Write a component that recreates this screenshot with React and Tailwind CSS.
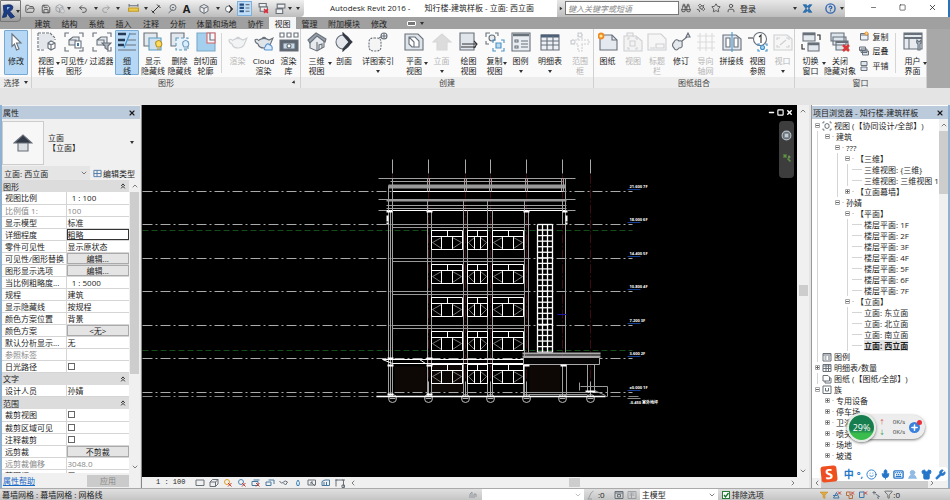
import React from "react";
import {
  Smile, Mic, Keyboard, Shirt, Wrench, UserRound, FolderOpen, Save, Undo2, Redo2,
  Binoculars, Star, User, Satellite, CircleHelp, ChevronDown, ChevronUp, ChevronLeft,
  ChevronRight, X, Minus, Square, Funnel, Plus,
} from "lucide-react";

const S = ({ children, size = "size-5", box = "0 0 20 20", className = "" }) => (
  <svg viewBox={box} className={`${size} shrink-0 ${className}`} fill="none" stroke="#68707a" strokeWidth="1.1" aria-hidden="true">
    {children}
  </svg>
);

const corners = "M1 5V1H5M15 1H19V5M19 15V19H15M5 19H1V15";
const Teapot = () => (
  <path d="M5 8C8 6 12 6 15 8L19 6L16 13Q14 16 10 16Q5 16 4 12Q1 11 1 8Q3 6 5 9M8 6.500Q10 4 12 6.500" fill="#dfe4e9" />
);

const ICONS = {
  cursor: <S><path d="M6 2L15 11H10.500L13 17L10.500 18L8.500 12L6 14.500Z" fill="#fff" /></S>,
  template: <S><path d="M3 2H14L18 6V17H3Z" fill="#e3e7ec" stroke="none" /><path d="M2 1H14L19 6V8M2 1V18H9" strokeDasharray="3 1" /><path d="M12 11L15 9L19 11V16L15 18L12 16ZM12 11L15 13L19 11M15 13V18" fill="#fff" /></S>,
  visibility: <S><path d={corners} /><path d="M5 8L9 5H15V13H5ZM5 8H12V14" fill="#e5e9ee" /><path d="M11 9H17V16H11Z" fill="#fff" /><path d="M13 11H15V14H13Z" fill="#4179a7" stroke="none" /></S>,
  filter: <S><path d={corners} /><path d="M5 8L9 5H15V13H5ZM5 8H12V14" fill="#e5e9ee" /><path d="M10 11H19L16 14V18L13 16V14Z" fill="#aeb5bd" /></S>,
  thin: <S><path d="M1 2H9M1 8H8M1 13H7" stroke="#253954" strokeWidth="2.500" /><path d="M12 2H19M11 8H19M9 13H19M1 18H19" /><path d="M13 1L7 16" stroke="#4291ca" /></S>,
  showHidden: <S><path d="M1 1H14V14H1Z" fill="#e3e8ee" /><path d="M6 6H18V18H6Z" fill="#cfe1ef" stroke="#5c9bc2" /><path d="M13 10Q16 7 18 10Q20 13 17 15H14Q12 12 13 10ZM14 17H17" fill="#ffdb5c" stroke="#b68d20" /></S>,
  removeHidden: <S><path d="M1 1H14V14H1Z" fill="#e3e8ee" /><path d="M6 6H18V18H6Z" fill="#e8f2fa" stroke="#5c9bc2" strokeDasharray="3 2" /><path d="M13 10Q16 7 18 10Q20 13 17 15H14Q12 12 13 10ZM14 17H17" fill="#d9efff" stroke="#6f9abb" /></S>,
  cutProfile: <S><path d="M1 1H19V19H1Z" fill="#a4d0ed" stroke="#7aa9c8" /><path d="M11 1H19V11H11Z" fill="#f5f7fa" stroke="#dc6262" /><path d="M14 1V8H19" /></S>,
  teapot: <S><Teapot /></S>,
  cloud: <S><Teapot /><path d="M11 15Q13 10 16 13Q19 14 18 18H12Q9 18 11 15Z" fill="#d5e9ff" stroke="#5d93ca" /></S>,
  gallery: <S><path d="M1 1H5V5H1ZM8 1H12V5H8ZM15 1H19V5H15Z" fill="#fff" /><path d="M1 8H19V19H1Z" fill="#5c6570" /><path d="M4 11H16V17H4Z" fill="#c7d9e8" /><circle cx="10" cy="14" r="2" fill="#fff" /></S>,
  house: <S><path d="M3 9V16L10 19L17 15V8L10 3Z" fill="#e8ebee" /><path d="M1 8L9 1L19 7L18 10L10 4L3 11Z" fill="#98a1ab" /><path d="M10 19V10M12 18V13L15 12V16" /></S>,
  section: <S><circle cx="9" cy="10" r="7" fill="#e4e8ed" /><path d="M9 1L18 10L9 19V17L15 10L9 3Z" fill="#333a43" stroke="#333a43" /></S>,
  callout: <S><path d="M6 6H8Q13 6 13 10V15Q13 19 8 19H6Q1 19 1 15V10Q1 6 6 6" strokeDasharray="2 1" fill="#f5f5f5" /><circle cx="16" cy="4" r="3" /><path d="M11 6L13 5M13 4H19M16 1V7" /></S>,
  plan: <S><path d="M1 2H14L19 7V18H1Z" fill="#e0e5eb" /><path d="M5 5H11L15 9V15H8L5 12ZM5 5L10 10V15" fill="#fff" /></S>,
  elevation: <S><path d="M1 10L10 2L19 10H15V18H5V10Z" fill="#9a9a9a" stroke="#888" /></S>,
  drafting: <S><path d="M1 1H15V18H1Z" fill="#e0e5eb" /><path d="M3 12H18M15 9L18 12L15 16M2 15H17" stroke="#333" /></S>,
  duplicate: <S><path d="M1 5V1H5M10 1H13V4M1 9V12H4" /><circle cx="7" cy="6" r="3" fill="#e8ebee" /><path d="M8 11V8H11M16 8H19V11M19 16V19H16M11 19H8V16" stroke="#4e91c4" /><path d="M11 11H16V16H11Z" fill="#b9dcf3" stroke="#4e91c4" /></S>,
  legend: <S><path d="M1 1H19V19H1Z" fill="#e9edf1" /><path d="M2 3H18" strokeWidth="2.500" /><path d="M4 8H7V10H4ZM4 14H7V16H4ZM10 9H17M10 12H17M10 15H17" /></S>,
  schedule: <S><path d="M1 3H19V18H1Z" fill="#edf0f4" /><path d="M1 4H19" strokeWidth="3" stroke="#4d6078" /><path d="M1 9H19M1 13H19M7 4V18M13 4V18" /></S>,
  scope: <S><path d="M8 8V1H12V8M12 12V19H8V12H1V8H19V12Z" strokeDasharray="2 1" /><circle cx="10" cy="3" r="2" /><circle cx="3" cy="10" r="2" /></S>,
  sheet: <S><path d="M2 3H14L19 8V18H2Z" fill="#e4e9ef" /><path d="M14 3V8H19" /><circle cx="3" cy="4" r="2.500" fill="#ffe98a" stroke="#ed8a26" strokeWidth="1.800" /></S>,
  viewSheet: <S><path d="M1 4H13L19 9V19H1ZM4 4V1H10V5" fill="#e6e6e6" /><path d="M5 8V6H7M12 6H14V8M14 15V17H12M7 17H5V15" /><path d="M7 9H12V14H7Z" /></S>,
  title: <S><path d="M1 2H14L19 7V18H1Z" fill="#eee" /><path d="M9 12H17V16H9ZM3 16H8" /></S>,
  revision: <S><path d="M3 10Q5 6 8 9Q12 8 11 12Q12 16 8 16Q5 20 3 16Q0 13 3 10ZM11 9L16 5M15 5L17 1L19 5Z" fill="#e5e9ed" /></S>,
  guide: <S><path d="M4 1V19M10 1V19M16 1V19M1 4H19M1 10H19M1 16H19" stroke="#999" /></S>,
  match: <S><path d="M1 3H14L19 7V18H1Z" fill="#e4e9ef" /><path d="M4 6H8V15H4ZM12 6H16V15H12Z" fill="#fff" /><path d="M10 0V20" stroke="#3b9bdb" /></S>,
  reference: <S><circle cx="12" cy="7" r="6.500" fill="#fff" /><path d="M0 6H5M11 5L13 3V11" stroke="#333" /><path d="M10 14V12H12M17 12H19V14M19 17V19H17M12 19H10V17" stroke="#4291ca" /><circle cx="14.500" cy="15.500" r="2" fill="#a9d5f0" stroke="#4291ca" /></S>,
  viewport: <S><path d="M1 3H14L19 7V18H1Z" fill="#eee" /><path d="M4 8V6H7M13 6H16V8M16 13V15H13M7 15H4V13M7 13L13 8" /></S>,
  switch: <S><path d="M2 1H14V9H2ZM7 11H18V19H7Z" fill="#e4e9ef" /><path d="M2 2H14M7 12H18" strokeWidth="2.500" /><path d="M16 3H19V8M4 17H1V12" stroke="#222" /></S>,
  closeHidden: <S><path d="M1 1H14V9H1ZM3 5H16V13H3ZM6 9H18V18H6Z" fill="#dce4ec" /><path d="M6 10H18" strokeWidth="2" /><path d="M13 13L19 19M19 13L13 19" stroke="#dc3636" strokeWidth="2.500" /></S>,
  ui: <S><path d="M1 1H19V17H1Z" fill="#e7ebef" /><path d="M1 2H19M1 6H19" strokeWidth="2" /><path d="M6 7V17" /><path d="M14 8Q13 11 15 12V18H17V12Q19 11 18 8L16 10Z" fill="#b8cadb" /></S>,
  copySmall: <S size="size-[10px]"><path d="M3 5H18V18H3ZM3 8H18" strokeWidth="2" fill="#edf1f5" /><circle cx="15" cy="5" r="3" fill="#ffdc7b" stroke="#ee8c25" strokeWidth="2" /></S>,
  cascade: <S size="size-[10px]"><path d="M1 2H13V9H1ZM4 6H16V13H4ZM7 10H19V18H7Z" strokeWidth="2" fill="#dce4ec" /></S>,
  tile: <S size="size-[10px]"><path d="M4 1H16V9H4ZM4 12H16V19H4Z" strokeWidth="2" fill="#dce4ec" /></S>,
};

const Tri = ({ className = "" }) => (
  <svg viewBox="0 0 4 3" className={`h-[3px] w-1 shrink-0 ${className}`} aria-hidden="true"><path d="M0 0H4L2 3Z" fill="#333" /></svg>
);

const PANELS = [
  {
    title: "选择", drop: true,
    tools: [{ w: "w-8", icon: "cursor", lines: ["修改"], on: true }],
  },
  {
    title: "图形", corner: true,
    tools: [
      { w: "w-7", icon: "template", lines: ["视图", "样板"], menu: "side" },
      { w: "w-7", icon: "visibility", lines: ["可见性/", "图形"] },
      { w: "w-[27px]", icon: "filter", lines: ["过滤器"] },
      { w: "w-6", icon: "thin", lines: ["细", "线"], on: true },
      { w: "w-7", icon: "showHidden", lines: ["显示", "隐藏线"] },
      { w: "w-[25px]", icon: "removeHidden", lines: ["删除", "隐藏线"] },
      { w: "w-[27px]", icon: "cutProfile", lines: ["剖切面", "轮廓"] },
      { rule: true },
      { w: "w-[27px]", icon: "teapot", lines: ["渲染"], off: true },
      { w: "w-[25px]", icon: "cloud", lines: ["Cloud", "渲染"] },
      { w: "w-[25px]", icon: "gallery", lines: ["渲染", "库"] },
    ],
  },
  {
    title: "创建",
    tools: [
      { w: "w-[31px]", icon: "house", lines: ["三维", "视图"], menu: "side" },
      { w: "w-6", icon: "section", lines: ["剖面"] },
      { w: "w-11", icon: "callout", lines: ["详图索引"], menu: "below" },
      { w: "w-7", icon: "plan", lines: ["平面", "视图"], menu: "side" },
      { w: "w-[27px]", icon: "elevation", lines: ["立面"], off: true, menu: "below" },
      { w: "w-[27px]", icon: "drafting", lines: ["绘图", "视图"] },
      { w: "w-[25px]", icon: "duplicate", lines: ["复制", "视图"], menu: "side" },
      { w: "w-[27px]", icon: "legend", lines: ["图例"], menu: "below" },
      { w: "w-8", icon: "schedule", lines: ["明细表"], menu: "below" },
      { w: "w-7", icon: "scope", lines: ["范围", "框"], off: true },
    ],
  },
  {
    title: "图纸组合",
    tools: [
      { w: "w-[27px]", icon: "sheet", lines: ["图纸"] },
      { w: "w-6", icon: "viewSheet", lines: ["视图"], off: true },
      { w: "w-6", icon: "title", lines: ["标题", "栏"], off: true },
      { w: "w-6", icon: "revision", lines: ["修订"] },
      { w: "w-[25px]", icon: "guide", lines: ["导向", "轴网"], off: true },
      { w: "w-[27px]", icon: "match", lines: ["拼接线"] },
      { w: "w-[25px]", icon: "reference", lines: ["视图", "参照"] },
      { w: "w-[25px]", icon: "viewport", lines: ["视口"], off: true, menu: "below" },
    ],
  },
  {
    title: "窗口",
    tools: [
      { w: "w-[31px]", icon: "switch", lines: ["切换", "窗口"], menu: "side" },
      { w: "w-7", icon: "closeHidden", lines: ["关闭", "隐藏对象"] },
      { stack: true },
      { rule: true },
      { w: "w-[29px]", icon: "ui", lines: ["用户", "界面"], menu: "side" },
    ],
  },
];

function Tool({ tool }) {
  if (tool.rule) return <div className="mx-0.5 my-1 w-px bg-[#d5d5d5]" />;
  if (tool.stack)
    return (
      <div className="flex w-[39px] flex-col items-center justify-around pb-1">
        {[["copySmall", "复制"], ["cascade", "层叠"], ["tile", "平铺"]].map(([icon, label]) => (
          <button key={label} className="flex items-center gap-1">{ICONS[icon]}<span>{label}</span></button>
        ))}
      </div>
    );
  return (
    <button
      disabled={tool.off}
      className={`relative flex shrink-0 flex-col items-center pt-[3px] leading-[10px] whitespace-nowrap ${tool.w} ${tool.off ? "text-[#b5b5b5]" : ""}`}
    >
      {tool.on && <span className={`absolute top-px bottom-0.5 rounded-[1px] border border-[#75a9d6] bg-[#b6d8f5] ${tool.w === "w-8" ? "inset-x-1" : "inset-x-0"}`} />}
      <span className={`relative ${tool.off ? "opacity-30" : ""}`}>{ICONS[tool.icon]}</span>
      <span className="relative mt-1 flex flex-col items-center">{tool.lines.map((l) => <span key={l}>{l}</span>)}</span>
      {tool.menu === "below" && <Tri className="mt-1" />}
      {tool.menu === "side" && <Tri className="absolute right-0 bottom-3" />}
    </button>
  );
}

function Ribbon() {
  return (
    <section className="flex h-[59px] shrink-0 bg-[#a8a8a8]">
      {PANELS.map((p) => (
        <div key={p.title} className="flex shrink-0 flex-col border-r border-[#d0d0d0] bg-[#fafafa]">
          <div className="flex h-12 -mr-px">{p.tools.map((t, i) => <Tool key={i} tool={t} />)}</div>
          <div className="relative flex h-[11px] items-center justify-center gap-1 bg-[#ededed] text-[#444]">
            {p.title}{p.drop && <Tri />}
            {p.corner && <Tri className="absolute right-1 -rotate-45" />}
          </div>
        </div>
      ))}
    </section>
  );
}

const Q = {
  cube: <S size="size-[10px]"><path d="M10 1L18 5V14L10 19L2 14V5ZM2 5L10 9L18 5M10 9V19" strokeWidth="2" fill="#eee" /></S>,
  sync: <S size="size-[10px]" className="opacity-50"><path d="M2 5L9 1L16 5V13L9 17L2 13ZM2 5L9 9L16 5M9 9V17" strokeWidth="2" /><circle cx="15" cy="14" r="4" fill="#ddd" /></S>,
  ruler: <S size="size-[11px]"><path d="M1 9H19V15H1Z" fill="#ecc94f" stroke="#c39b24" strokeWidth="2" /><path d="M2 5H18M2 2V7M18 2V7" strokeWidth="2" /></S>,
  dim: <S size="size-[10px]"><path d="M3 17L17 3M1 13L7 19M12 1L19 8" stroke="#333" strokeWidth="2" /></S>,
  tag: <S size="size-[10px]"><circle cx="12" cy="7" r="6" strokeWidth="2" /><path d="M11 11L3 18M10 7H14" strokeWidth="2" /></S>,
  sect: <S size="size-[10px]"><circle cx="9" cy="10" r="6" strokeWidth="2" fill="#fff" /><path d="M10 2L18 10L10 18L14 10Z" fill="#333" stroke="#333" /></S>,
  thin: <S size="size-[11px]"><path d="M1 3H9M1 9H9M1 15H9" stroke="#234b80" strokeWidth="4" /><path d="M12 3H19M12 9H19M12 15H19" strokeWidth="2" /></S>,
  close: <S size="size-[11px]"><path d="M2 1H15V7H2ZM4 7H17V15H4Z" strokeWidth="2" fill="#eee" /><path d="M11 11L18 18M18 11L11 18" stroke="#d92e3a" strokeWidth="3" /></S>,
  swap: <S size="size-[11px]"><path d="M4 2H18V9H4ZM2 11H14V19H2Z" strokeWidth="2" fill="#eee" /></S>,
};
const lu = "size-[10px] shrink-0 text-[#444]";
const QUICK = [
  ["w-[18px]", "打开", <FolderOpen className={lu} />],
  ["w-3.5", "保存", <Save className={lu} />],
  ["w-[13px]", "同步", Q.sync],
  ["w-1.5", "同步选项", <Tri />],
  ["w-[22px]", "放弃", <Undo2 className={lu} />],
  ["w-1", "放弃列表", <Tri />],
  ["w-4", "重做", <Redo2 className={`${lu} opacity-40`} />],
  ["w-2", "重做列表", <Tri />],
  ["w-[22px]", "测量", Q.ruler],
  ["w-1", "测量选项", <Tri />],
  ["w-4", "尺寸标注", Q.dim],
  ["w-4", "标记", Q.tag],
  ["w-[13px]", "文字", <b className="text-[11px]">A</b>],
  ["w-[22px]", "三维", Q.cube],
  ["w-1.5", "三维选项", <Tri />],
  ["w-4", "剖面", Q.sect],
];

function Header() {
  return (
    <header className="grid shrink-0 grid-cols-[21px_minmax(0,1fr)] grid-rows-[17px_12px] bg-white">
      <div className="col-start-1 col-end-3 row-start-2 row-end-3 bg-[#a0a0a0]" />
      <button aria-label="应用程序菜单" className="col-start-1 row-start-1 row-end-3 flex h-[22px] items-center justify-center rounded-br-sm border border-[#777] bg-linear-to-b from-[#eee] to-[#999]">
        <S size="size-[15px]"><path d="M3 2L10 1Q18 1 15 7L12 10L18 17L13 19L8 12L7 17L2 18L4 11Z" fill="#1c3d86" stroke="#142c60" /><path d="M8 4L12 4L8 8Z" fill="#8fb6ea" stroke="none" /></S>
        <Tri />
      </button>
      <div className="col-start-2 row-start-1 flex min-w-0 items-stretch">
        <nav aria-label="快速访问" className="flex w-[283px] shrink-0 items-center rounded-br bg-linear-to-b from-[#f0f0f0] to-[#bdbdbd]">
          {QUICK.map(([w, label, icon]) => (
            <button key={label} aria-label={label} className={`flex shrink-0 items-center justify-center ${w}`}>{icon}</button>
          ))}
          <button aria-label="细线" className="flex h-[15px] w-[15px] shrink-0 items-center justify-center border border-[#7eb0da] bg-[#bfddf6]">{Q.thin}</button>
          <button aria-label="关闭隐藏窗口" className="flex w-[22px] shrink-0 items-center justify-center">{Q.close}</button>
          <button aria-label="切换窗口" className="flex w-3 shrink-0 items-center justify-center">{Q.swap}</button>
          <button aria-label="窗口列表" className="flex w-2 shrink-0 items-center justify-center"><Tri /></button>
          <button aria-label="自定义" className="flex w-2 shrink-0 items-center justify-center"><Tri /></button>
        </nav>
        <h1 className="flex min-w-0 flex-1 items-center gap-3.5 overflow-hidden pb-0.5 pl-[26px] whitespace-pre text-[#222]">
          <span>Autodesk Revit 2016 -</span><span>知行楼-建筑样板 - 立面: 西立面</span>
        </h1>
        <div className="flex w-72 shrink-0 items-center bg-linear-to-b from-[#e8e8e8] to-[#bdbdbd] pb-px">
          <button aria-label="展开搜索" className="flex w-2 justify-center"><Tri className="-rotate-90" /></button>
          <input aria-label="搜索" placeholder="键入关键字或短语" className="h-[14px] w-[114px] border border-[#777] bg-white px-0.5 text-[8px] italic placeholder:text-[#888]" />
          <button aria-label="查找" className="ml-0.5"><Binoculars className={lu} /></button>
          <button aria-label="通讯中心" className="ml-[5px]"><Satellite className={lu} /></button>
          <button aria-label="收藏夹" className="ml-[5px]"><Star className={lu} /></button>
          <button className="ml-[5px] flex items-center gap-1"><User className={lu} />登录</button>
          <button aria-label="登录选项" className="ml-[37px]"><Tri /></button>
          <button aria-label="交换应用" className="ml-[5px]"><S size="size-[11px]"><path d="M2 3L8 3L18 17H12ZM18 3H13L2 17H7Z" fill="#2b74b8" stroke="#205d9c" /></S></button>
          <button aria-label="帮助" className="ml-3"><CircleHelp className="size-[11px] text-[#3268b3]" strokeWidth={3} /></button>
          <button aria-label="帮助选项" className="ml-1"><Tri /></button>
        </div>
        <div className="flex w-[105px] shrink-0 items-center border-r-2 border-[#2474b8] pb-0.5">
          <button aria-label="最小化" className="ml-[25px] w-[7px]"><Minus className="size-[7px]" /></button>
          <button aria-label="最大化" className="ml-[22px] w-[7px]"><Square className="size-[7px]" /></button>
          <button aria-label="关闭" className="ml-[22px] w-2"><X className="size-[9px]" /></button>
        </div>
      </div>
      <nav aria-label="功能区选项卡" className="col-start-2 row-start-2 flex items-center pl-2 text-[#222]">
        {[["建筑", "w-[27px]"], ["结构", "w-[27px]"], ["系统", "w-[27px]"], ["插入", "w-[27px]"], ["注释", "w-7"], ["分析", "w-[26px]"], ["体量和场地", "w-[51px]"], ["协作", "w-[27px]"], ["视图", "w-[27px]"], ["管理", "w-[27px]"], ["附加模块", "w-[42px]"], ["修改", "w-7"]].map(([t, w]) => (
          <button key={t} className={`h-full shrink-0 ${w} ${t === "视图" ? "bg-[#f5f5f5]" : ""}`}>{t}</button>
        ))}
        <button aria-label="选项卡显示" className="ml-3.5 flex items-center gap-1">
          <span className="flex h-[5px] w-[9px] items-center justify-center rounded-[1px] border border-white bg-[#777]" /><Tri />
        </button>
      </nav>
    </header>
  );
}

const Check = ({ label }) => (
  <input type="checkbox" aria-label={label} className="block size-[7px] appearance-none border border-[#666] bg-white" />
);

const PROPS = [
  { group: "图形" },
  ["视图比例", "  1 : 100"], ["比例值 1:", "100", "off"], ["显示模型", "标准"], ["详细程度", "粗略", "edit"],
  ["零件可见性", "显示原状态"], ["可见性/图形替换", "编辑...", "btn"], ["图形显示选项", "编辑...", "btn"],
  ["当比例粗略度...", "  1 : 5000"], ["规程", "建筑"], ["显示隐藏线", "按规程"], ["颜色方案位置", "背景"],
  ["颜色方案", "<无>", "btn"], ["默认分析显示...", "无"], ["参照标签", "", "off"], ["日光路径", "", "check"],
  { group: "文字" },
  ["设计人员", "孙婧"],
  { group: "范围" },
  ["裁剪视图", "", "check"], ["裁剪区域可见", "", "check"], ["注释裁剪", "", "check"],
  ["远剪裁", "不剪裁", "btn"], ["远剪裁偏移", "3048.0", "off"], ["范围框", "无"],
];

const chev = "size-2 shrink-0 text-[#444]";

function Properties() {
  return (
    <aside className="flex w-[140px] shrink-0 flex-col border-l-2 border-[#8fb2d3] bg-[#f0f0f0]">
      <div className="mt-px flex h-[13px] shrink-0 items-center justify-between bg-[#bccbdb] pr-1 pl-px">
        <h2>属性</h2><button aria-label="关闭属性"><X className="size-2" strokeWidth={3.500} /></button>
      </div>
      <button className="mr-0.5 flex h-[47px] shrink-0 items-center text-left">
        <span className="flex h-11 w-[42px] items-center justify-center border border-[#ccc] bg-[#f7f7f7]">
          <S><path d="M5 9H15V18H5Z" fill="#dcdfe3" /><path d="M1 10L10 2L19 10Z" fill="#343b48" /></S>
        </span>
        <span className="ml-1 flex-1 leading-[10px]">立面<br />【立面】</span>
        <Tri className="mr-1" />
      </button>
      <div className="flex h-[14px] shrink-0 items-center">
        <div className="relative flex h-full w-[88px] items-center">
          <select aria-label="视图实例" className="h-full w-full appearance-none bg-[#e5e5e5] pl-0.5 text-[8px]"><option>立面: 西立面</option></select>
          <ChevronDown className={`${chev} pointer-events-none absolute right-0.5`} />
        </div>
        <button className="ml-[3px] flex items-center gap-px whitespace-nowrap">
          <S size="size-[9px]"><path d="M2 3H18V17H2ZM2 10H18M9 3V17" stroke="#4b78a5" strokeWidth="2" /></S>编辑类型
        </button>
      </div>
      <div className="flex min-h-0 flex-1 overflow-hidden">
        <div className="min-w-0 flex-1 overflow-hidden">
          <table className="w-full table-fixed border-collapse bg-white whitespace-pre">
            <colgroup><col className="w-[64px]" /><col /></colgroup>
            <tbody>
              {PROPS.map((r, i) =>
                r.group ? (
                  <tr key={i} className="h-3 bg-[#dcdcdc]">
                    <th colSpan={2} className="h-3 p-0 font-normal">
                      <div className="flex h-3 items-center justify-between pr-[3px] pl-px">{r.group}
                        <S size="size-[6px]"><path d="M4 10L10 3L16 10M4 18L10 11L16 18" stroke="#222" strokeWidth="3" /></S>
                      </div>
                    </th>
                  </tr>
                ) : (
                  <tr key={i} className={`h-3 ${r[2] === "off" ? "text-[#888]" : ""}`}>
                    <th className="h-3 border-r border-b border-[#d5d5d5] p-0 pl-[3px] text-left font-normal leading-[11px]">{r[0]}</th>
                    <td className="h-3 border-b border-[#d5d5d5] p-0 leading-[11px]">
                      {r[2] === "btn" ? <button className="block h-[11px] w-full border border-[#aaa] bg-[#e4e4e4] leading-[9px]">{r[1]}</button>
                        : r[2] === "check" ? <span className="block pl-px"><Check label={r[0]} /></span>
                        : r[2] === "edit" ? <input aria-label={r[0]} defaultValue={r[1]} className="block h-[11px] w-full border border-[#333] text-[8px]" />
                        : <span className="pl-px">{r[1]}</span>}
                    </td>
                  </tr>
                )
              )}
            </tbody>
          </table>
        </div>
        <div className="flex w-[11px] shrink-0 flex-col items-center bg-[#f0f0f0]">
          <ChevronUp className={`${chev} my-0.5`} />
          <div className="w-[9px] flex-[181] bg-[#cdcdcd]" />
          <div className="flex-[86]" />
          <ChevronDown className={`${chev} my-0.5`} />
        </div>
      </div>
      <div className="flex h-[15px] shrink-0 items-center justify-between pr-[11px] pl-px">
        <a href="#help" className="text-[#1767c5] underline">属性帮助</a>
        <button disabled className="h-3 w-[42px] bg-[#cbcbcb] text-[#888]">应用</button>
      </div>
    </aside>
  );
}

const GRID = [392, 428, 465, 490, 526, 562, 590];
const LEVELS = [[191, "21.600 7F"], [224, "18.000 6F"], [258, "14.400 5F"], [291, "10.800 4F"], [325, "7.200 3F"], [358, "3.600 2F"], [392, "±0.000 1F"]];
const BAYS = [[431, 462], [467, 487], [492, 523]];

function Elevation() {
  return (
    <svg viewBox="142 105 655 372" className="h-full w-full" preserveAspectRatio="xMidYMid slice" fill="none" stroke="#fff" role="img" aria-label="西立面">
      <g transform="translate(0.5 0.5)">
        <path d="M394 366H426V392H394ZM431 364H463V392H431ZM529 364H560V392H529Z" fill="#0d0805" stroke="none" />
        {GRID.map((x) => (
          <g key={x}>
            <path d={`M${x} 174V394`} stroke="#4a1018" strokeDasharray="9 2 2 2" opacity="0.8" />
            <path d={`M${x} 159V173`} stroke="#aaa" />
            <circle cx={x} cy="398" r="4" stroke="#bbb" /><path d={`M${x - 3} 398H${x + 3}M${x} 381V396`} stroke="#aaa" />
          </g>
        ))}
        <path d="M142 230H632M142 350H632" stroke="#124d17" strokeDasharray="6 3" />
        {LEVELS.map(([y, t]) => (
          <g key={y}>
            <path d={`M142 ${y}H632`} stroke="#aaa" strokeDasharray="10 3 2 3" />
            <path d={`M627 ${y - 2}H640`} stroke="#143f92" />
            <text x="629" y={y - 4} fontSize="4" fontWeight="700" fill="#fff" stroke="none">{t}</text>
          </g>
        ))}
        <path d="M142 396H640" stroke="#888" strokeDasharray="10 3 2 3" />
        <path d="M627 398H640" stroke="#888" />
        <text x="629" y="403" fontSize="4" fontWeight="700" fill="#fff" stroke="none">-0.450 室外地坪</text>
        <g stroke="#a0a0a0">
          <path d="M378 178H575M390 181H562M378 199H575M386 205H566M386 208H566M378 210H386M567 210H575" />
          <path d="M388 185H565M388 187H565M386 200H566" stroke="#999" strokeWidth="2" />
          <path d="M392 191H562M386 210H566" stroke="#fff" />
          <path d="M427 178V191M429 178V191M464 178V191M466 178V191M489 178V191M491 178V191M525 178V191M527 178V191M561 178V191M563 178V191" />
          <path d="M388 185V395M390 210V395M392 178V395M427 200V395M431 210V395M463 200V395M467 210V395M487 200V395M492 210V395M524 200V395M528 210V352M562 200V224M565 178V352M562 364V395M566 364V395M523 364V395M587 364V392M594 364V392" />
        </g>
        <path d="M386 211H392M426 211H432M523 211H529M562 211H567M387 215V224M566 215V224" strokeWidth="2" strokeDasharray="6 1" />
        {[224, 258, 291, 325].map((y) => <path key={y} d={`M392 ${y}H524M392 ${y + 3}H524`} stroke="#999" />)}
        {[230, 264, 297, 331, 364].map((y) =>
          BAYS.map(([a, b]) => {
            const w = b - a, l = a + Math.round(w / 3), r = b - Math.round(w / 3), m = Math.round((a + b) / 2);
            return (
              <g key={`${y}-${a}`}>
                <path d={`M${a} ${y}H${b}V${y + 19}H${a}ZM${a} ${y + 6}H${b}M${m} ${y}V${y + 6}M${l} ${y + 6}V${y + 19}M${r} ${y + 6}V${y + 19}`} />
                <path d={`M${l} ${y + 7}L${a + 1} ${y + 12}L${l} ${y + 18}M${r} ${y + 7}L${b - 1} ${y + 12}L${r} ${y + 18}`} stroke="#aaa" strokeWidth="0.7" />
              </g>
            );
          })
        )}
        <path d="M537 224V352M542 224V352M547 224V352M552 224V352" strokeWidth="1.300" />
        {Array.from({ length: 24 }, (_, i) => 224 + i * 5.55).map((y) => <path key={y} d={`M537 ${y}H552`} strokeWidth="1.300" />)}
        <path d="M382 359H523V363H392L382 359M419 359L425 363H523" />
        <path d="M523 357H599V364H523Z" fill="#050505" stroke="#aaa" />
        <path d="M522 353H600M522 356H600" stroke="#aaa" strokeWidth="2" />
        <path d="M387 358H393M387 365H393M426 358H432M426 365H432M523 365H529M560 365H566M387 394H393M426 394H432M585 391H595" strokeWidth="2" />
        <path d="M376 396H605" strokeWidth="1.500" />
        <path d="M528 392H587M528 394H587M579 382V390M580 386H607V396M594 390L605 395" stroke="#999" />
        <path d="M557 314H566" stroke="#1818a0" />
      </g>
    </svg>
  );
}

const VB = [
  <path d="M2 4H18V15H2Z" />, <path d="M2 8L7 3H18V12L13 17H2ZM2 8H13V17M13 8L18 3" />,
  <><circle cx="8" cy="8" r="5" stroke="#e1a12c" /><path d="M10 10L17 17M17 10L10 17" stroke="#c83b32" /></>,
  <><circle cx="8" cy="8" r="5" stroke="#5289b5" /><path d="M10 10L17 17M17 10L10 17" stroke="#c83b32" /></>,
  <><path d="M2 7H14V15H2ZM5 4H17" stroke="#47789e" /><path d="M10 10L17 17M17 10L10 17" stroke="#c83b32" /></>,
  <path d="M2 8H12V15H2ZM7 4H18V12" stroke="#47789e" />, <path d="M1 6Q5 13 8 9Q12 3 17 8L13 14L9 10" />,
  <path d="M10 4Q5 9 8 15H12Q15 9 10 4Z" stroke="#3c84bd" />, <path d="M2 4H17V14H2ZM8 8L16 16M12 8H8V12" />,
  <path d="M2 7L8 4H17V15H2ZM6 8V15M11 8V15" stroke="#47789e" />, <path d="M2 17V4H17V17M0 4H5M14 4H20M14 14H19V19H14Z" />,
];

function Drawing() {
  return (
    <main className="ml-px flex min-w-0 flex-1 flex-col border-l border-[#888]">
      <div className="flex min-h-0 flex-1">
        <div className="relative min-w-0 flex-1 overflow-hidden bg-black">
          <Elevation />
          <div className="absolute top-1 right-1 flex gap-0.5 text-white">
            <Minus className="size-[7px]" strokeWidth={5} /><Square className="size-[7px]" strokeWidth={4} /><X className="size-[7px]" strokeWidth={5} />
          </div>
          <div className="absolute top-4 right-[3px] flex h-[57px] w-[15px] flex-col items-center gap-3 rounded-sm bg-[#3d3d3d] pt-[9px]">
            <S size="size-[11px]"><circle cx="10" cy="10" r="8" stroke="#b8c1c8" fill="#66707a" strokeWidth="2" /><path d="M6 6H14V14H6Z" fill="#c5ccd0" /></S>
            <S size="size-[10px]"><path d="M3 3L9 9M11 11L17 17M3 9L9 3" stroke="#5c963e" strokeWidth="3" /><path d="M12 8H17M14 5V11" stroke="#78a75c" strokeWidth="2" /></S>
          </div>
        </div>
        <div className="flex w-3 shrink-0 flex-col items-center bg-[#f0f0f0]">
          <ChevronUp className={`${chev} my-0.5`} />
          <div className="flex-[170]" /><div className="h-[11px] w-[9px] bg-[#cdcdcd]" /><div className="flex-[172]" />
          <ChevronDown className={`${chev} my-0.5`} />
        </div>
      </div>
      <div className="flex h-[11px] shrink-0 items-center bg-[#f0f0f0]">
        <button className="ml-3.5 w-[39px] text-left font-['Liberation_Mono',monospace] text-[7px] whitespace-pre">1 : 100</button>
        <div className="flex gap-1">
          {VB.map((v, i) => <button key={i} aria-label={`视图控制 ${i + 1}`}><S size="size-[10px]"><g strokeWidth="2">{v}</g></S></button>)}
        </div>
        <ChevronLeft className={`${chev} ml-1`} />
        <div className="flex-[210]" /><div className="h-[9px] w-[11px] bg-[#cdcdcd]" /><div className="flex-[208]" />
        <ChevronRight className={chev} /><div className="w-3" />
      </div>
    </main>
  );
}

/* guides: one flag per ancestor column; box: "-" expanded, "+" collapsed, "" leaf */
const TREE = [
  ["", "-", "视图 (【协同设计/全部】)", "view"], ["1", "-", "建筑"], ["10", "-", "???"], ["101", "-", "【三维】"],
  ["1011", "", "三维视图: {三维}"], ["1011", "", "三维视图: 三维视图 1"], ["101", "+", "【立面幕墙】"],
  ["10", "-", "孙婧"], ["100", "-", "【平面】"],
  ...[1, 2, 3, 4, 5, 6, 7].map((n) => ["1001", "", `楼层平面: ${n}F`]),
  ["100", "-", "【立面】"], ["1000", "", "立面: 东立面"], ["1000", "", "立面: 北立面"], ["1000", "", "立面: 南立面"], ["1000", "", "立面: 西立面", "sel"],
  ["", "", "图例", "legend"], ["", "+", "明细表/数量", "table"], ["", "", "图纸 (【图纸/全部】)", "sheet"], ["", "-", "族", "family"],
  ["0", "+", "专用设备"], ["0", "+", "停车场"], ["0", "+", "卫浴装置"], ["0", "+", "喷头"], ["0", "+", "场地"], ["0", "+", "坡道"],
];
const TI = {
  view: <path d="M2 5V2H5M15 2H18V5M18 15V18H15M5 18H2V15M6 7L10 5L14 7V13L10 15L6 13Z" />,
  legend: <path d="M2 3H18V18H2ZM2 6H18M5 10H9M5 14H9M12 10H16M12 14H16" />,
  table: <path d="M2 3H18V17H2ZM2 6H18M2 11H18M8 3V17M13 3V17" />,
  sheet: <path d="M2 3H12L15 6V14H2ZM6 14V18H18V8H15" />,
  family: <path d="M2 2H18V17H2ZM7 6V12H13V6" />,
};

function Browser() {
  return (
    <aside className="ml-0.5 flex w-[139px] shrink-0 flex-col border-r-2 border-l border-r-[#8fb2d3] border-l-[#999] bg-white">
      <div className="mt-px flex h-[13px] shrink-0 items-center justify-between bg-[#bccbdb] pr-1 pl-px">
        <h2>项目浏览器 - 知行楼-建筑样板</h2><button aria-label="关闭浏览器"><X className="size-2" strokeWidth={3.500} /></button>
      </div>
      <div className="flex min-h-0 flex-1 overflow-hidden">
        <ul className="min-w-0 flex-1 overflow-hidden pt-px">
          {TREE.map(([guides, box, text, icon], i) => (
            <li key={i} className="flex h-[11px] items-center whitespace-nowrap">
              {guides.split("").map((g, k) => (
                <span key={k} className="flex h-full w-[10px] shrink-0 justify-center"><span className={`h-full w-px ${g === "1" || (k === 3) ? "bg-[#d5d5d5]" : ""}`} /></span>
              ))}
              {(guides.length < 4 || box) ? (
                <span className="flex h-full w-[10px] shrink-0 items-center justify-center">
                  {box ? (
                    <button aria-label={box === "-" ? "折叠" : "展开"} className="size-[5px]">
                      <svg viewBox="0 0 5 5" className="size-[5px]" fill="none" stroke="#aaa"><path d="M.5 .5H4.500V4.500H.5Z" /><path d={box === "+" ? "M1 2.500H4M2.500 1V4" : "M1 2.500H4"} stroke="#666" /></svg>
                    </button>
                  ) : <span className="h-full w-px bg-[#d5d5d5]" />}
                </span>
              ) : null}
              {TI[icon] ? <S size="size-[10px]" className="mr-0.5"><g strokeWidth="2">{TI[icon]}</g></S>
                : <span className={`mr-0.5 h-px shrink-0 bg-[#d5d5d5] ${box ? "w-0.5" : "w-2.5"}`} />}
              <span className={icon === "sel" ? "bg-[#e3e3e3] font-bold" : ""}>{text}</span>
            </li>
          ))}
        </ul>
        <div className="flex w-[9px] shrink-0 flex-col items-center bg-[#f0f0f0]">
          <ChevronUp className={`${chev} my-0.5`} />
          <div className="w-full flex-[65] bg-[#cdcdcd]" /><div className="flex-[280]" />
          <ChevronDown className={`${chev} my-0.5`} />
        </div>
      </div>
      <div className="flex h-[10px] shrink-0 items-center bg-[#f0f0f0] pl-px">
        <ChevronLeft className={chev} /><div className="h-[9px] flex-1 bg-[#cdcdcd]" /><ChevronRight className={`${chev} mr-3`} />
      </div>
    </aside>
  );
}

function StatusBar() {
  const g = "size-[10px]";
  return (
    <footer className="flex h-3 shrink-0 items-center border-t border-[#aaa] bg-linear-to-b from-[#e0e0e0] to-[#c5c5c5] whitespace-nowrap">
      <p className="min-w-0 flex-1 pl-0.5">幕墙网格 : 幕墙网格 : 网格线</p>
      <div className="flex h-full w-[482px] shrink-0 items-center">
        <S size={g} className="mr-1 opacity-60"><path d="M4 16V8L8 4V16M12 16V8H16V14" strokeWidth="2" /></S>
        <div className="relative flex h-full w-[102px] items-center">
          <select aria-label="工作集" className="h-full w-full appearance-none bg-white text-[8px]"><option></option></select>
          <ChevronDown className={`${chev} pointer-events-none absolute right-0.5 opacity-50`} />
        </div>
        <S size={g} className="ml-0.5 opacity-50"><path d="M5 17L10 6L15 2M3 18H12" strokeWidth="2" /></S>
        <span className="ml-0.5">:0</span>
        <S size={g} className="ml-[9px]"><path d="M2 3H18V17H2ZM2 6H18M7 9H13V14H7Z" strokeWidth="2" /></S>
        <S size={g} className="mx-[3px] opacity-50"><path d="M2 3H18V17H2ZM5 6H15M5 10H15M9 6V16" strokeWidth="2" /></S>
        <div className="relative flex h-full w-[78px] items-center">
          <select aria-label="设计选项" className="h-full w-full appearance-none bg-white pl-0.5 text-[8px]"><option>主模型</option></select>
          <ChevronDown className={`${chev} pointer-events-none absolute right-0.5`} />
        </div>
        <label className="ml-1 flex items-center gap-0.5">
          <span className="relative flex size-2">
            <input type="checkbox" defaultChecked className="peer size-2 appearance-none border border-[#287d36] bg-white" />
            <svg viewBox="0 0 8 8" className="pointer-events-none absolute inset-0 hidden size-2 peer-checked:block" fill="none" stroke="#19722a" strokeWidth="1.300"><path d="M2 4L3.500 6L6.500 2" /></svg>
          </span>排除选项
        </label>
        <div className="ml-auto flex items-center gap-[3px] pr-[50px]">
          <S size={g}><path d="M2 4H18L12 10V17L8 15V10Z" fill="#e0a943" stroke="#c48d2c" /></S>
          <S size={g}><path d="M3 16L9 5L14 16ZM2 11H10" stroke="#3c78ad" strokeWidth="2" /><path d="M12 3L18 9M18 3L12 9" stroke="#c93e3e" strokeWidth="2" /></S>
          <S size={g}><path d="M3 4H10V10H15V17H8V11H3Z" stroke="#b66e3e" strokeWidth="2" /><path d="M12 3L18 9M18 3L12 9" stroke="#c93e3e" strokeWidth="2" /></S>
          <S size={g}><path d="M3 4H12V15H3Z" stroke="#3c78ad" strokeWidth="2" /><path d="M12 3L18 9M18 3L12 9" stroke="#c93e3e" strokeWidth="2" /></S>
          <S size={g}><path d="M3 5H10M6 2V9M9 8L17 13L13 14L15 18" strokeWidth="2" /></S>
          <span className="flex items-center"><Funnel className="size-[9px] text-[#555]" />:0</span>
        </div>
      </div>
    </footer>
  );
}

function NetMeter() {
  return (
    <div className="absolute right-[25px] bottom-[61px] flex h-6 w-[72px] items-center rounded-full bg-[#ededed] pr-[5px] shadow-[0_1px_3px_#0008]">
      <div className="absolute -left-[6px] flex size-[29px] items-center justify-center rounded-full border-2 border-[#e4ece5] bg-linear-to-b from-[#167e4e] from-60% to-[#3bbd4d] to-75% text-[9px] text-white shadow-[0_1px_3px_#0008]">29%</div>
      <div className="ml-[26px] flex flex-1 flex-col text-[6px] leading-[10px] text-[#333]">
        <p className="flex justify-between"><span className="text-[#d83d3d]">↑</span>0K/s</p>
        <p className="flex justify-between"><span className="text-[#2b9447]">↓</span>0K/s</p>
      </div>
      <button aria-label="加速" className="relative ml-1 flex size-[11px] items-center justify-center rounded-full bg-[#3981dd] text-white">
        <Plus className="size-[9px]" strokeWidth={4} /><span className="absolute -top-0.5 -right-0.5 size-[5px] rounded-full bg-[#e8323b]" />
      </button>
    </div>
  );
}

function InputBar() {
  const c = "size-[11px] shrink-0";
  return (
    <div className="absolute right-0.5 bottom-[19px] flex h-[14px] w-[127px] items-center justify-between rounded-sm bg-white pr-0.5 text-[#2476c9]">
      <span className="flex size-4 -rotate-6 items-center justify-center rounded-[3px] bg-[#ee4f20] text-[14px] leading-none font-bold text-white">S</span>
      <b className="ml-1 text-[10px]">中</b><b className="text-[9px]">°,</b>
      <Smile className={c} /><Mic className={c} fill="currentColor" /><Keyboard className={c} strokeWidth={3} />
      <UserRound className={`${c} opacity-50`} fill="currentColor" /><Shirt className={c} fill="currentColor" /><Wrench className={c} fill="currentColor" />
    </div>
  );
}

export default function App() {
  return (
    <div lang="zh-CN" className="relative flex h-screen flex-col overflow-hidden bg-[#e4e4e4] font-['Open_Sans','Noto_Sans_CJK_SC',sans-serif] text-[8px] leading-[11px] text-[#1c1c1c] [text-spacing-trim:space-all]">
      <Header />
      <Ribbon />
      <div className="h-[17px] shrink-0 bg-[#e4e4e4]" />
      <div className="flex min-h-0 flex-1"><Properties /><Drawing /><Browser /></div>
      <StatusBar />
      <InputBar />
      <NetMeter />
    </div>
  );
}
